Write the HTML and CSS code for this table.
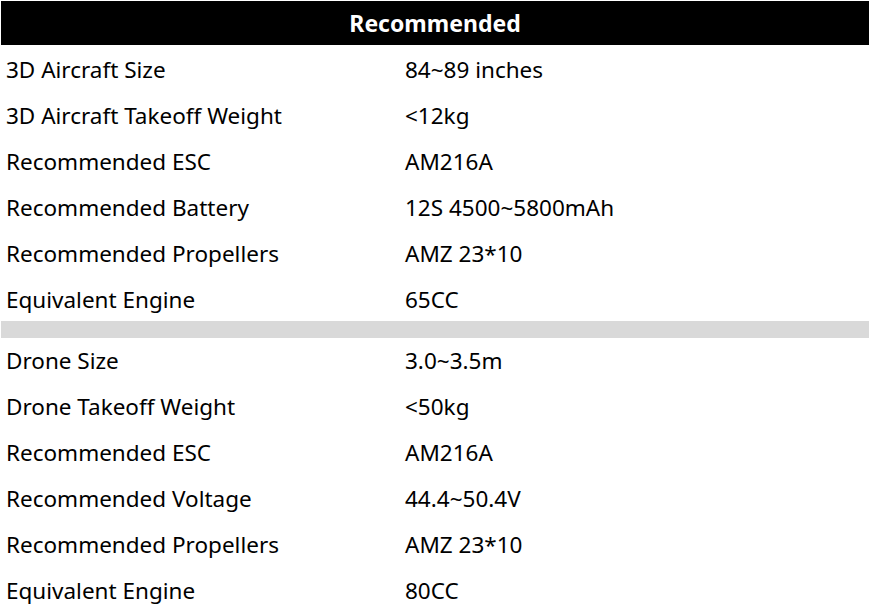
FILE: index.html
```html
<!DOCTYPE html>
<html>
<head>
<meta charset="utf-8">
<link rel="stylesheet" href="styles.css">
</head>
<body>
<table class="spec">
  <colgroup><col class="c1"><col class="c2"></colgroup>
  <thead>
    <tr><th colspan="2" class="head">Recommended</th></tr>
  </thead>
  <tbody>
    <tr><td class="k">3D Aircraft Size</td><td class="v">84~89 inches</td></tr>
    <tr><td class="k">3D Aircraft Takeoff Weight</td><td class="v">&lt;12kg</td></tr>
    <tr><td class="k">Recommended ESC</td><td class="v">AM216A</td></tr>
    <tr><td class="k">Recommended Battery</td><td class="v">12S 4500~5800mAh</td></tr>
    <tr><td class="k">Recommended Propellers</td><td class="v">AMZ 23*10</td></tr>
    <tr><td class="k">Equivalent Engine</td><td class="v">65CC</td></tr>
  </tbody>
  <tbody class="sep">
    <tr><td colspan="2"></td></tr>
  </tbody>
  <tbody class="second">
    <tr><td class="k">Drone Size</td><td class="v">3.0~3.5m</td></tr>
    <tr><td class="k">Drone Takeoff Weight</td><td class="v">&lt;50kg</td></tr>
    <tr><td class="k">Recommended ESC</td><td class="v">AM216A</td></tr>
    <tr><td class="k">Recommended Voltage</td><td class="v">44.4~50.4V</td></tr>
    <tr><td class="k">Recommended Propellers</td><td class="v">AMZ 23*10</td></tr>
    <tr><td class="k">Equivalent Engine</td><td class="v">80CC</td></tr>
  </tbody>
</table>
</body>
</html>
```
FILE: styles.css
```css
html, body {
  margin: 0;
  padding: 0;
  background: #fff;
}
body {
  padding: 1px;
  font-family: "Noto Sans", "Open Sans", sans-serif;
  color: #000;
}
.spec {
  width: 868px;
  border-collapse: collapse;
  border-spacing: 0;
  table-layout: fixed;
}
.c1 { width: 399px; }
.head {
  background: #000;
  color: #fff;
  font-weight: bold;
  font-size: 23px;
  height: 44px;
  padding: 0;
  text-align: center;
}
.k, .v {
  height: 46px;
  box-sizing: border-box;
  padding: 3px 0 0 5px;
  font-size: 22.5px;
  text-align: left;
  vertical-align: middle;
}
.second .k, .second .v {
  padding: 0 0 1px 5px;
}
.sep td {
  height: 17px;
  padding: 0;
  background: #d9d9d9;
}
```
